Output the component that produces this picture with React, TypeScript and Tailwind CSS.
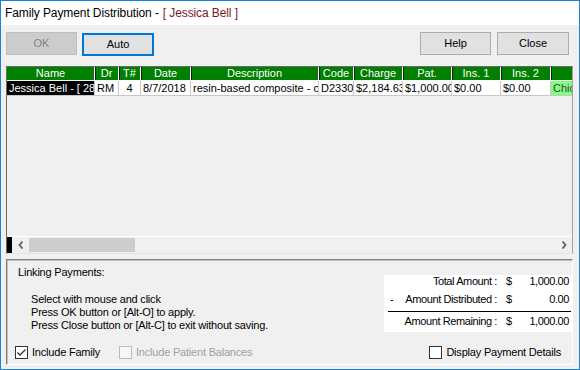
import { useState } from "react";

const font = "font-['Liberation_Sans',Arial,sans-serif]";

const columns = [
	{ name: "Name", width: 88, value: "Jessica Bell - [ 28", cls: "bg-black text-white" },
	{ name: "Dr", width: 24, value: "RM", cls: "bg-white" },
	{ name: "T#", width: 22, value: "4", cls: "bg-white justify-center" },
	{ name: "Date", width: 50, value: "8/7/2018", cls: "bg-white" },
	{ name: "Description", width: 128, value: "resin-based composite - one surface", cls: "bg-white" },
	{ name: "Code", width: 35, value: "D2330", cls: "bg-white" },
	{ name: "Charge", width: 49, value: "$2,184.63", cls: "bg-white" },
	{ name: "Pat.", width: 49, value: "$1,000.00", cls: "bg-white" },
	{ name: "Ins. 1", width: 49, value: "$0.00", cls: "bg-white" },
	{ name: "Ins. 2", width: 50, value: "$0.00", cls: "bg-white" },
	{ name: "", width: 40, value: "Chicago", cls: "bg-[#80ff80] text-[#404040]" },
];

const Button = ({
	label,
	width,
	disabled,
	focused,
}: {
	label: string;
	width: string;
	disabled?: boolean;
	focused?: boolean;
}) => (
	<button
		type="button"
		className={`${width} h-[23px] text-[11px] leading-none ${
			disabled
				? "bg-[#cccccc] border border-[#bfbfbf] text-[#838383]"
				: focused
					? "bg-[#e1e1e1] border-2 border-[#0078d7] text-black"
					: "bg-[#e1e1e1] border border-[#adadad] text-black"
		}`}
	>
		{label}
	</button>
);

const Check = ({
	label,
	checked,
	disabled,
	onToggle,
}: {
	label: string;
	checked?: boolean;
	disabled?: boolean;
	onToggle?: () => void;
}) => (
	<label className="flex items-center gap-[4px] h-[13px] text-[11px] leading-[13px] whitespace-nowrap">
		<span
			onClick={disabled ? undefined : onToggle}
			className={`w-[13px] h-[13px] shrink-0 flex items-center justify-center border ${
				disabled ? "border-[#bcbcbc] bg-[#f7f7f7]" : "border-[#333333] bg-white"
			}`}
		>
			{checked && (
				<svg width="11" height="11" viewBox="0 0 11 11">
					<path d="M1.5 5.5 L4 8 L9.5 2.5" stroke="#333333" strokeWidth="1.4" fill="none" />
				</svg>
			)}
		</span>
		<span className={disabled ? "text-[#a0a0a0]" : "text-black"}>{label}</span>
	</label>
);

const Chevron = ({ dir }: { dir: "left" | "right" }) => (
	<svg width="6" height="8" viewBox="0 0 6 8">
		<path
			d={dir === "left" ? "M4.5 0.5 L1.5 4 L4.5 7.5" : "M1.5 0.5 L4.5 4 L1.5 7.5"}
			stroke="#606060"
			strokeWidth="1.8"
			fill="none"
		/>
	</svg>
);

const SumRow = ({ dash, label, value }: { dash?: boolean; label: string; value: string }) => (
	<div className="flex whitespace-nowrap leading-[13px]">
		<span className="w-[12px]">{dash ? "-" : ""}</span>
		<span className="flex-1 text-right">{label}</span>
		<span className="ml-[9px] w-[8px]">$</span>
		<span className="w-[55px] text-right">{value}</span>
	</div>
);

export default function App() {
	const [family, setFamily] = useState(true);
	const [details, setDetails] = useState(false);
	return (
		<div className={`${font} w-[580px] h-[370px] border border-[#1883d7] bg-[#f0f0f0] flex flex-col text-black`}>
			<div className="h-[24px] bg-white flex items-center pl-[4px] text-[12px] tracking-[-0.1px]">
				Family Payment Distribution - <span className="ml-[4px] text-[#7a1c1c]">[ Jessica Bell ]</span>
			</div>
			<div className="flex flex-col pl-[5px] pr-[6px] pt-[6px]">
				<div className="flex items-center">
					<Button label="OK" width="w-[71px]" disabled />
					<div className="ml-[5px]">
						<Button label="Auto" width="w-[72px]" focused />
					</div>
					<div className="ml-auto flex gap-[6px] mr-[4px]">
						<Button label="Help" width="w-[71px]" />
						<Button label="Close" width="w-[72px]" />
					</div>
				</div>

				<div className="mt-[10px] h-[188px] border border-t-[#696969] border-l-[#696969] border-r-[#a0a0a0] border-b-[#e3e3e3] flex flex-col overflow-hidden">
					<div className="flex h-[14px] shrink-0">
						{columns.map((c, i) => (
							<div
								key={i}
								style={{ width: c.width }}
								className={`shrink-0 bg-[#008000] text-white text-[11px] leading-[13px] text-center border-r border-b border-white overflow-hidden whitespace-nowrap ${
									i > 0 ? "shadow-[inset_1px_0_0_#1a1a1a]" : ""
								}`}
							>
								{c.name}
							</div>
						))}
					</div>
					<div className="flex h-[15px] shrink-0">
						{columns.map((c, i) => (
							<div
								key={i}
								style={{ width: c.width }}
								className={`shrink-0 flex items-center px-[2px] text-[11px] leading-[14px] border-r border-b border-[#c8c8c8] overflow-hidden whitespace-nowrap ${c.cls}`}
							>
								{c.value}
							</div>
						))}
					</div>
					<div className="flex-1" />
					<div className="h-[17px] shrink-0 flex border-t border-white">
						<div className="w-[5px] bg-black" />
						<div className="w-[17px] flex items-center justify-center">
							<Chevron dir="left" />
						</div>
						<div className="w-[106px] my-[1px] bg-[#cdcdcd]" />
						<div className="flex-1" />
						<div className="w-[17px] flex items-center justify-center">
							<Chevron dir="right" />
						</div>
					</div>
				</div>

				<div className="mt-[5px] h-[106px] border border-t-[#808080] border-l-[#808080] border-r-white border-b-white shadow-[inset_1px_1px_0_#c0c0c0] flex text-[11px] tracking-[-0.2px]">
					<div className="flex flex-col pl-[8px] pt-[6px] flex-1">
						<div className="pl-[3px] leading-[13px]">Linking Payments:</div>
						<div className="mt-[14px] pl-[16px] leading-[13px]">
							<div>Select with mouse and click</div>
							<div>Press OK button or [Alt-O] to apply.</div>
							<div>Press Close button or [Alt-C] to exit without saving.</div>
						</div>
						<div className="mt-[14px] flex items-center">
							<div className="w-[104px]">
								<Check label="Include Family" checked={family} onToggle={() => setFamily(!family)} />
							</div>
							<Check label="Include Patient Balances" disabled />
						</div>
					</div>
					<div className="flex flex-col items-end pt-[15px]">
						<div className="w-[188px] h-[57px] bg-white flex flex-col pl-[6px] pr-[3px] tracking-[-0.4px]">
							<SumRow label="Total Amount :" value="1,000.00" />
							<div className="mt-[5px]">
								<SumRow dash label="Amount Distributed :" value="0.00" />
							</div>
							<div className="mt-[5px] h-px bg-black -mr-[2px] -ml-[2px]" />
							<div className="mt-[3px]">
								<SumRow label="Amount Remaining :" value="1,000.00" />
							</div>
						</div>
						<div className="mt-[14px] mr-[11px]">
							<Check label="Display Payment Details" checked={details} onToggle={() => setDetails(!details)} />
						</div>
					</div>
				</div>
			</div>
		</div>
	);
}
